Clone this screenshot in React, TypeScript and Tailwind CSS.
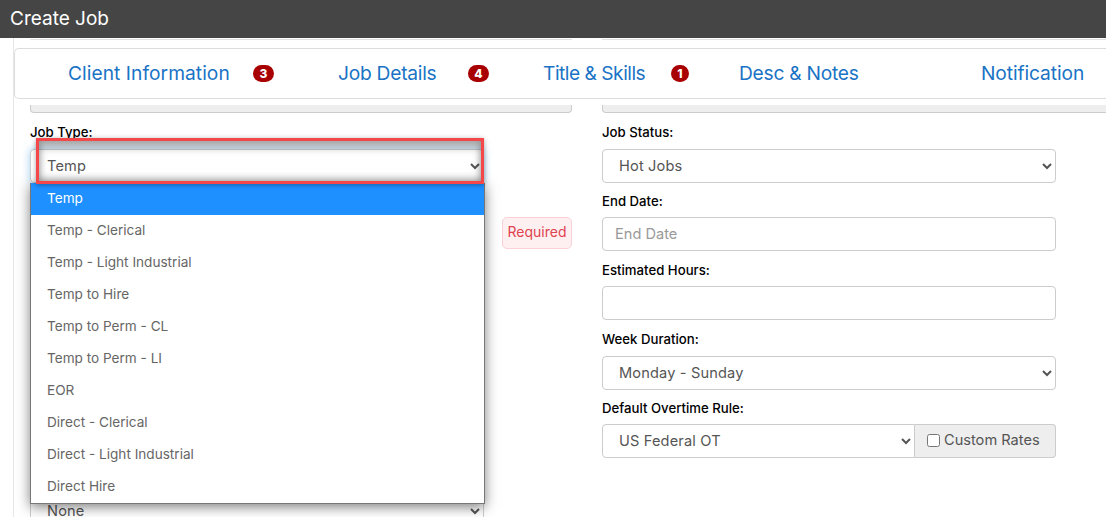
const font = { fontFamily: '"Inter", "Open Sans", sans-serif' };

const jobTypes = [
  'Temp',
  'Temp - Clerical',
  'Temp - Light Industrial',
  'Temp to Hire',
  'Temp to Perm - CL',
  'Temp to Perm - LI',
  'EOR',
  'Direct - Clerical',
  'Direct - Light Industrial',
  'Direct Hire',
];

function Badge({ value, round }: { value: string; round?: boolean }) {
  return (
    <span
      className={`flex h-[17px] items-center justify-center rounded-full bg-[#a80000] text-[12px] font-extrabold text-white ${
        round ? 'w-[18px]' : 'w-[21px]'
      }`}
    >
      {value}
    </span>
  );
}

function Label({ children }: { children: string }) {
  return <label className="mb-[7.4px] block h-[17px] text-[13.2px] leading-[17px] font-medium text-black">{children}</label>;
}

function Select({ value, className = 'w-[454px] rounded-[4px]' }: { value: string; className?: string }) {
  return (
    <select
      defaultValue={value}
      className={`block h-[34px] shrink-0 border border-[#ccc] bg-white pl-3 pr-1 text-[14.6px] tracking-[0.15px] text-[#555] ${className}`}
    >
      <option>{value}</option>
    </select>
  );
}

export default function App() {
  return (
    <div style={font} className="h-[517px] w-[1106px] overflow-hidden bg-white">
      <div className="flex h-[38px] items-center bg-[#454545] pl-[10px] text-[19px] text-white">Create Job</div>

      <div className="relative ml-[13px] h-[479px] overflow-hidden border-l border-[#e6e6e6]">
        {/* Bottom edge of the section scrolled under the header */}
        <div className="mt-[1px] flex h-[1px] gap-[30px] pl-4">
          <div className="w-[542px] shrink-0 bg-[#e2e2e2]" />
          <div className="w-[520px] shrink-0 bg-[#e2e2e2]" />
        </div>

        {/* Tabs */}
        <div className="mt-[8px] flex h-[51px] items-center rounded-l-[5px] border-y border-l border-[#ddd] text-[19.2px] whitespace-nowrap text-[#1a73c5]">
          <span className="ml-[53px] w-[162px] tracking-[0.05px]">Client Information</span>
          <span className="ml-[23px]"><Badge value="3" /></span>
          <span className="ml-[64px] w-[98px] tracking-[-0.25px]">Job Details</span>
          <span className="ml-[32px]"><Badge value="4" /></span>
          <span className="ml-[54px] w-[101px] tracking-[-0.5px]">Title &amp; Skills</span>
          <span className="ml-[27px]"><Badge value="1" round /></span>
          <span className="ml-[50px] w-[118px] tracking-[-0.25px]">Desc &amp; Notes</span>
          <span className="ml-[124px] w-[102px] tracking-[-0.1px]">Notification</span>
        </div>

        <div className="mt-[6px] flex gap-[30px] pl-4">
          {/* Left column */}
          <div className="w-[542px] shrink-0">
            <div className="h-[8px] rounded-b-[4px] border-x border-b border-[#ccc] bg-[#eee]" />
            <div className="mt-[11px] flex flex-col">
              <Label>Job Type:</Label>
              <Select
                value="Temp"
                className="mt-[1px] -mb-[1px] w-[454px] rounded-[4px] border-[#66afe9] shadow-[0_0_8px_rgba(102,175,233,0.6)]"
              />
            </div>
            <div className="mt-[34.6px] flex justify-end">
              <span className="flex h-[32px] w-[70px] items-center justify-center rounded-[5px] border border-[#fbd0d8] bg-[#feeff1] pb-[2px] text-[14px] text-[#e0434f]">
                Required
              </span>
            </div>
            <Select value="None" className="mt-[245px] w-[454px] rounded-[4px]" />
          </div>

          {/* Right column */}
          <div className="w-[520px] shrink-0">
            <div className="h-[8px] rounded-b-[4px] border-x border-b border-[#ccc] bg-[#eee]" />
            <div className="mt-[11px] flex flex-col gap-[10.6px]">
              <div className="flex flex-col">
                <Label>Job Status:</Label>
                <Select value="Hot Jobs" className="mt-[1px] -mb-[1px] w-[454px] rounded-[4px]" />
              </div>
              <div className="flex flex-col">
                <Label>End Date:</Label>
                <input
                  placeholder="End Date"
                  className="block h-[34px] w-[454px] rounded-[4px] border border-[#ccc] px-3 text-[14.6px] placeholder:text-[#999]"
                />
              </div>
              <div className="flex flex-col">
                <Label>Estimated Hours:</Label>
                <input className="block h-[34px] w-[454px] rounded-[4px] border border-[#ccc] px-3 text-[14.6px]" />
              </div>
              <div className="flex flex-col">
                <Label>Week Duration:</Label>
                <Select value="Monday - Sunday" className="mt-[1px] -mb-[1px] w-[454px] rounded-[4px]" />
              </div>
              <div className="flex flex-col">
                <Label>Default Overtime Rule:</Label>
                <div className="flex w-[454px]">
                  <Select value="US Federal OT" className="w-[313px] rounded-l-[4px]" />
                  <div className="flex h-[34px] flex-1 items-center gap-[4px] rounded-r-[4px] border border-l-0 border-[#ccc] bg-[#eee] pl-3 text-[14.6px] whitespace-nowrap text-[#555]">
                    <input type="checkbox" className="mb-[2px] h-[13px] w-[13px]" />
                    Custom Rates
                  </div>
                </div>
              </div>
            </div>
          </div>
        </div>

        {/* Open dropdown */}
        <ul className="absolute top-[145px] left-[16px] w-[455px] border border-t-0 border-[#777] bg-white text-[13.6px] text-[#666] shadow-[0_3px_12px_rgba(0,0,0,0.5)]">
          {jobTypes.map((type, index) => (
            <li
              key={type}
              className={`flex h-[32px] items-center pb-[2px] pl-4 ${index === 0 ? 'bg-[#1e90ff] text-white' : ''}`}
            >
              {type}
            </li>
          ))}
        </ul>

        {/* Annotation */}
        <div className="absolute top-[100px] left-[22px] h-[46px] w-[448px] border-[3px] border-[#f4474a] shadow-[inset_0_6px_8px_rgba(0,0,0,0.35),inset_0_-3px_6px_rgba(0,0,0,0.2),0_1px_5px_rgba(0,0,0,0.35)]" />
      </div>
    </div>
  );
}
